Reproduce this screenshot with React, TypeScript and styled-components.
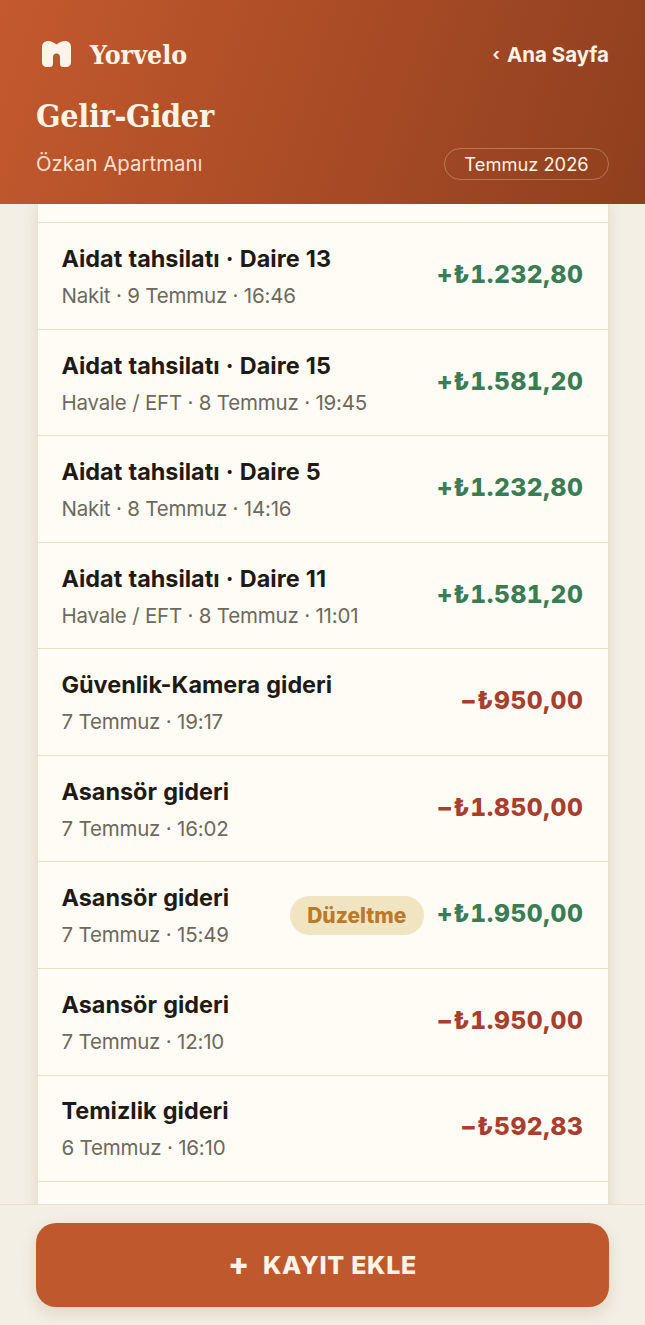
import React from "react";
import styled, { createGlobalStyle } from "styled-components";

const Global = createGlobalStyle`
  html, body { margin: 0; padding: 0; background: #f3efe4; }
  * { box-sizing: border-box; }
  #root { height: 1325px; }
`;
const Page = styled.div`
  width: 645px; height: 1325px; display: flex; flex-direction: column; overflow: hidden;
  background: #f3efe4; font-family: Inter, "Liberation Sans", sans-serif; color: #1f1a14;
`;
const Header = styled.header`
  height: 204px; flex: none; padding: 36px 36px 24px;
  background: linear-gradient(108deg, #c4592e 0%, #8f3f1e 100%);
  color: #fdf3e6; position: relative; z-index: 2;
`;
const TopBar = styled.div`display: flex; align-items: center; justify-content: space-between; height: 36px;`;
const Brand = styled.div`display: flex; align-items: center; gap: 19px; padding-left: 6px;`;
const BrandName = styled.span`font-family: "DejaVu Serif Condensed", "DejaVu Serif", serif; font-weight: 700; font-size: 26.500px;`;
const Back = styled.span`display: flex; align-items: center; gap: 7px; font-weight: 700; font-size: 20.5px;`;
const Chevron = styled.span`font-size: 17px; font-weight: 700;`;
const Title = styled.h1`margin: 22px 0 0; font-family: "DejaVu Serif Condensed", "DejaVu Serif", serif; font-weight: 700; font-size: 32px; line-height: 44px; letter-spacing: -0.3px;`;
const SubRow = styled.div`display: flex; align-items: center; justify-content: space-between; margin-top: 10px;`;
const Sub = styled.span`font-size: 20.4px; color: #f6dfcc; margin-bottom: 1px;`;
const Period = styled.span`
  height: 32px; width: 165px; display: flex; align-items: center; justify-content: center;
  border: 1px solid rgba(255, 235, 215, 0.3); border-radius: 16px; font-size: 18.3px; font-weight: 400;
`;
const Main = styled.main`flex: 1; min-height: 0; overflow: hidden; padding: 0 36.5px;`;
const Card = styled.div`background: #fffcf6; box-shadow: 0 0 14px rgba(110, 90, 50, 0.14); border-left: 1.5px solid #e8e1cd; border-right: 1.5px solid #e8e1cd;`;
const Stub = styled.div`height: 19.2px; border-bottom: 1.5px solid #e6dfca;`;
const Row = styled.div`
  height: 106.55px; padding: 0 24px; display: flex; align-items: center; gap: 13px;
  border-bottom: 1.5px solid #e6dfca;
`;
const Info = styled.div`flex: 1; min-width: 0; display: flex; flex-direction: column; gap: 8px; padding-top: 2px;`;
const RowTitle = styled.div`font-weight: 700; font-size: 23.4px; line-height: 30px; word-spacing: 0.7px; color: #1f1a14;`;
const Meta = styled.div`font-size: 20.5px; line-height: 28px; letter-spacing: -0.2px; color: #6e685d;`;
const Amount = styled.div<{ $kind: "in" | "out" }>`
  font-weight: 800; font-size: 24.6px; letter-spacing: 0.6px; white-space: nowrap; margin-bottom: 4px;
  font-variant-numeric: tabular-nums;
  color: ${(p) => (p.$kind === "in" ? "#3a7d55" : "#a83e2e")};
`;
const Badge = styled.span`
  height: 39px; width: 134px; display: flex; align-items: center; justify-content: center;
  border-radius: 20px; background: #f1e4c1; color: #b97a2a; font-weight: 800; font-size: 21px;
`;
const Footer = styled.footer`
  height: 121px; flex: none; padding: 18px 36px; background: #f3efe4; border-top: 1.5px solid #e8e2d1;
  position: relative; z-index: 2;
`;
const AddButton = styled.button`
  width: 100%; height: 84px; border: 0; border-radius: 20px; background: #bf582c; color: #fdf3e6;
  display: flex; align-items: center; justify-content: center; gap: 13px;
  font-family: Inter, sans-serif; font-weight: 800; font-size: 25px; letter-spacing: 0.7px;
  box-shadow: 0 6px 16px rgba(120, 80, 40, 0.16);
`;
const Plus = styled.span`font-size: 31px; font-weight: 800; line-height: 1; margin-top: -3px;`;

const Logo = () => (
  <svg width="29" height="26" viewBox="0 0 29 26" fill="#fdf3e6">
    <path d="M0 6C0 2 3 0 6 0C9 0 11.500 1.500 14.500 3.500C17.500 1.500 20 0 23 0C26 0 29 2 29 6V21C29 24.500 27 26 24 26H21.500C19 26 18 25 18 22V16C18 14 16.500 12.500 14.500 12.500C12.500 12.500 11 14 11 16V22C11 25 10 26 7.500 26H5C2 26 0 24.500 0 21Z" />
  </svg>
);

type Item = { title: string; meta: string; amount: string; kind: "in" | "out"; badge?: string };
const items: Item[] = [
  { title: "Aidat tahsilatı · Daire 13", meta: "Nakit · 9 Temmuz · 16:46", amount: "+₺1.232,80", kind: "in" },
  { title: "Aidat tahsilatı · Daire 15", meta: "Havale / EFT · 8 Temmuz · 19:45", amount: "+₺1.581,20", kind: "in" },
  { title: "Aidat tahsilatı · Daire 5", meta: "Nakit · 8 Temmuz · 14:16", amount: "+₺1.232,80", kind: "in" },
  { title: "Aidat tahsilatı · Daire 11", meta: "Havale / EFT · 8 Temmuz · 11:01", amount: "+₺1.581,20", kind: "in" },
  { title: "Güvenlik-Kamera gideri", meta: "7 Temmuz · 19:17", amount: "−₺950,00", kind: "out" },
  { title: "Asansör gideri", meta: "7 Temmuz · 16:02", amount: "−₺1.850,00", kind: "out" },
  { title: "Asansör gideri", meta: "7 Temmuz · 15:49", amount: "+₺1.950,00", kind: "in", badge: "Düzeltme" },
  { title: "Asansör gideri", meta: "7 Temmuz · 12:10", amount: "−₺1.950,00", kind: "out" },
  { title: "Temizlik gideri", meta: "6 Temmuz · 16:10", amount: "−₺592,83", kind: "out" },
];

export default function App() {
  return (
    <Page>
      <Global />
      <Header>
        <TopBar>
          <Brand><Logo /><BrandName>Yorvelo</BrandName></Brand>
          <Back><Chevron>‹</Chevron>Ana Sayfa</Back>
        </TopBar>
        <Title>Gelir-Gider</Title>
        <SubRow>
          <Sub>Özkan Apartmanı</Sub>
          <Period>Temmuz 2026</Period>
        </SubRow>
      </Header>
      <Main>
        <Card>
          <Stub />
          {items.map((it) => (
            <Row key={it.title + it.meta}>
              <Info>
                <RowTitle>{it.title}</RowTitle>
                <Meta>{it.meta}</Meta>
              </Info>
              {it.badge && <Badge>{it.badge}</Badge>}
              <Amount $kind={it.kind}>{it.amount}</Amount>
            </Row>
          ))}
          <Row />
        </Card>
      </Main>
      <Footer>
        <AddButton><Plus>+</Plus>KAYIT EKLE</AddButton>
      </Footer>
    </Page>
  );
}
